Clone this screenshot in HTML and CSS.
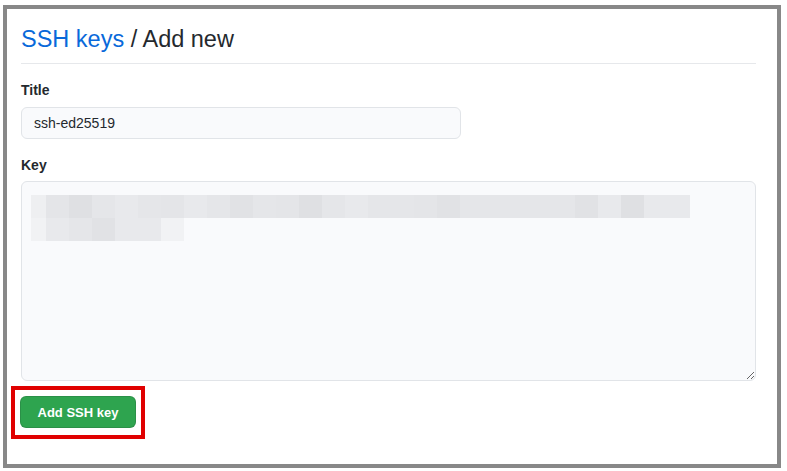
FILE: index.html
```html
<!DOCTYPE html>
<html>
<head>
<meta charset="utf-8">
<link rel="stylesheet" href="styles.css">
</head>
<body>
<div class="frame">
  <div class="subhead">
    <h2 class="subhead-heading"><a class="crumb" href="#">SSH keys</a> / Add new</h2>
  </div>
  <form class="form">
    <div class="form-group">
      <label class="label" for="title">Title</label>
      <input class="input input-title" id="title" type="text" value="ssh-ed25519">
    </div>
    <div class="form-group">
      <label class="label" for="key">Key</label>
      <div class="key-wrap">
        <textarea class="input textarea" id="key"></textarea>
        <div class="blur">
          <div class="blur-row">
            <span class="px w15 c1"></span><span class="px c2"></span><span class="px c3"></span><span class="px c4"></span><span class="px c5"></span><span class="px c4"></span><span class="px c2"></span><span class="px c5"></span><span class="px c4"></span><span class="px c6"></span><span class="px c4"></span><span class="px c2"></span><span class="px c3"></span><span class="px c4"></span><span class="px c5"></span><span class="px c4"></span><span class="px c4"></span><span class="px c2"></span><span class="px c6"></span><span class="px c4"></span><span class="px c4"></span><span class="px c4"></span><span class="px c4"></span><span class="px c4"></span><span class="px c6"></span><span class="px c5"></span><span class="px c3"></span><span class="px c5"></span><span class="px c5"></span>
          </div>
          <div class="blur-row">
            <span class="px w15 c7"></span><span class="px c5"></span><span class="px c4"></span><span class="px c6"></span><span class="px c5"></span><span class="px c5"></span><span class="px c7"></span>
          </div>
        </div>
      </div>
    </div>
    <div class="submit-box">
      <button class="btn-primary" type="button">Add SSH key</button>
    </div>
  </form>
</div>
</body>
</html>
```
FILE: styles.css
```css
* { box-sizing: border-box; }
html, body { margin: 0; padding: 0; background: #ffffff; }
body {
  font-family: "Liberation Sans", Arial, sans-serif;
  color: #24292e;
  font-size: 14px;
}
.frame {
  margin: 5px 6px 3px 3px;
  border: 4px solid #888888;
  padding: 15px 21px 24px 14px;
  height: 463px;
}
.subhead {
  padding-bottom: 9px;
  border-bottom: 1px solid #e6e8eb;
}
.subhead-heading {
  margin: 0;
  font-size: 23.5px;
  line-height: 30px;
  font-weight: 400;
  color: #24292e;
}
.crumb { color: #0969da; text-decoration: none; }
.form { display: flex; flex-direction: column; }
.form-group { margin-top: 16px; display: flex; flex-direction: column; }
.form-group + .form-group { margin-top: 16px; }
.label {
  font-weight: 600;
  font-size: 14px;
  line-height: 21px;
  margin-bottom: 6px;
  color: #24292e;
}
.form-group + .form-group .label { margin-bottom: 5px; }
.input {
  font-family: "Liberation Sans", Arial, sans-serif;
  font-size: 14px;
  color: #24292e;
  background: #f9fafc;
  border: 1px solid #e1e4e8;
  border-radius: 6px;
  padding: 5px 12px;
  outline: none;
}
.input-title { width: 440px; height: 32px; }
.key-wrap { position: relative; }
.textarea {
  display: block;
  width: 100%;
  height: 200px;
  resize: vertical;
}
.blur {
  position: absolute;
  left: 10px;
  top: 14px;
  display: flex;
  flex-direction: column;
}
.blur-row { display: flex; height: 23px; }
.px { display: block; width: 23px; height: 23px; }
.w15 { width: 15px; }
.c1 { background: #eeeff1; }
.c2 { background: #e4e5e8; }
.c3 { background: #dfe0e3; }
.c4 { background: #e5e6e9; }
.c5 { background: #e8e9ec; }
.c6 { background: #e1e2e5; }
.c7 { background: #f1f2f4; }
.submit-box {
  align-self: flex-start;
  margin: 5px 0 0 -10px;
  border: 4px solid #e00000;
  padding: 6px 5px 7px 5px;
}
.btn-primary {
  display: block;
  width: 116px;
  height: 32px;
  background: #2ea44f;
  color: #ffffff;
  border: 1px solid rgba(27, 31, 35, 0.15);
  border-radius: 6px;
  font-family: "Liberation Sans", Arial, sans-serif;
  font-weight: 700;
  font-size: 13px;
  padding: 0;
}
```
